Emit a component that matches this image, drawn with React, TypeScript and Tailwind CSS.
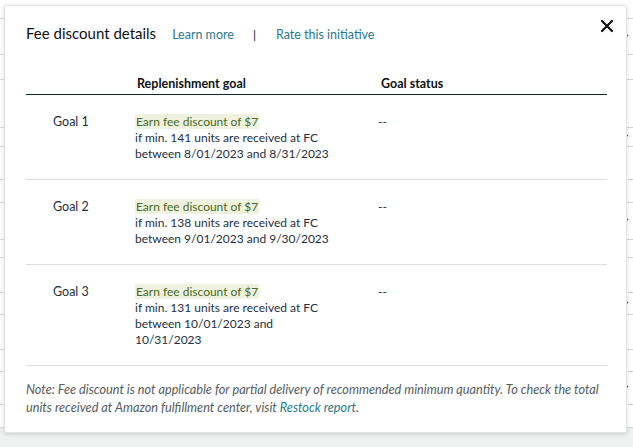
import React from "react";

const goals = [
  { label: "Goal 1", units: 141, range: "between 8/01/2023 and 8/31/2023" },
  { label: "Goal 2", units: 138, range: "between 9/01/2023 and 9/30/2023" },
  { label: "Goal 3", units: 131, range: "between 10/01/2023 and 10/31/2023" },
];

const bgRows = [19, 36, 25, 48, 19, 33, 23, 37, 18, 35, 22, 35, 22, 33, 23];

export default function App() {
  return (
    <div
      className="relative w-[633px] h-[447px] overflow-hidden bg-[#eff0f0]"
      style={{ fontFamily: 'Lato, "Noto Sans", Arial, sans-serif' }}
    >
      {/* Page behind the dialog */}
      <div className="flex flex-col bg-white">
        {bgRows.map((h, i) => (
          <div
            key={i}
            className="flex items-center justify-end border-b border-[#d5d9d9] pr-1"
            style={{ height: h }}
          >
            {i % 3 === 1 && (
              <svg width="8" height="8" viewBox="0 0 8 8" className="text-[#555]">
                <path d="M1 2l3 3 3-3" fill="none" stroke="currentColor" strokeWidth="1.2" />
              </svg>
            )}
          </div>
        ))}
      </div>

      {/* Dialog */}
      <div className="absolute left-[4px] top-[5px] w-[623px] h-[428px] bg-white rounded-[2px] border border-[#e3e6e6] shadow-[0_1px_4px_rgba(0,0,0,0.15)] px-[21px] pt-[17px]">
        <button className="absolute right-[8px] top-[9px] p-1 text-[#0f1111]" aria-label="Close">
          <svg width="14" height="14" viewBox="0 0 14 14">
            <path d="M2 2l10 10M12 2L2 12" stroke="currentColor" strokeWidth="2.2" strokeLinecap="round" />
          </svg>
        </button>

        <div className="flex items-baseline leading-[20px]">
          <h2 className="text-[15px] text-[#0f1111]">Fee discount details</h2>
          <a className="ml-[16px] text-[12.5px] text-[#2a7a8a]">Learn more</a>
          <span className="ml-[19px] text-[12px] text-[#0f1111]">|</span>
          <a className="ml-[20px] text-[12.5px] text-[#2a7a8a]">Rate this initiative</a>
        </div>

        <div className="mt-[31px] w-[581px] text-[12px]">
          <div className="grid grid-cols-[109px_243px_1fr] border-b-[1.5px] border-[#0f2a2a] pb-[2px] leading-[16px] text-[12.5px] font-bold text-[#0f1111]">
            <div />
            <div className="pl-[2px]">Replenishment goal</div>
            <div className="pl-[3px]">Goal status</div>
          </div>

          {goals.map((g) => (
            <div
              key={g.label}
              className="grid grid-cols-[109px_243px_1fr] pt-[19px] pb-[17px] leading-[16px] text-[#232f3e] border-b border-[#dcdfdf]"
            >
              <div className="pl-[27px] text-[12.5px]">{g.label}</div>
              <div className="w-[200px]">
                <div>
                  <span className="bg-[#eef2df] px-[1px] text-[#4b6a25]">Earn fee discount of $7</span>
                </div>
                <div>if min. {g.units} units are received at FC</div>
                <div>{g.range}</div>
              </div>
              <div>--</div>
            </div>
          ))}

          <p className="mt-[14px] w-[578px] italic text-[12.7px] leading-[18px] text-[#555d5d]">
            Note: Fee discount is not applicable for partial delivery of recommended minimum quantity. To check the total
            units received at Amazon fulfillment center, visit <span className="text-[#2a7a8a]">Restock report</span>.
          </p>
        </div>
      </div>
    </div>
  );
}
